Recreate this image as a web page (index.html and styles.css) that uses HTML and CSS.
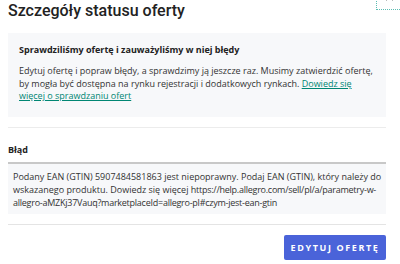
FILE: index.html
```html
<!DOCTYPE html>
<html lang="pl">
<head>
<meta charset="utf-8">
<link rel="stylesheet" href="styles.css">
</head>
<body>
<div class="page">
  <div class="focus-corner"><span class="close-mark"></span></div>
  <h1 class="title">Szczegóły statusu oferty</h1>
  <div class="notice">
    <h2 class="notice-head">Sprawdziliśmy ofertę i zauważyliśmy w niej błędy</h2>
    <p class="notice-text">Edytuj ofertę i popraw błędy, a sprawdzimy ją jeszcze raz. Musimy zatwierdzić ofertę, by mogła być dostępna na rynku rejestracji i dodatkowych rynkach. <a class="link" href="#">Dowiedz się więcej o sprawdzaniu ofert</a></p>
  </div>
  <div class="divider"></div>
  <div class="error-head">Błąd</div>
  <div class="error-box">Podany EAN (GTIN) 5907484581863 jest niepoprawny. Podaj EAN (GTIN), który należy do wskazanego produktu. Dowiedz się więcej <span class="url">https://help.allegro.com/sell/pl/a/parametry-w-allegro-aMZKj37Vauq?marketplaceId=allegro-pl#czym-jest-ean-gtin</span></div>
  <div class="divider bottom"></div>
  <div class="actions">
    <button class="btn">EDYTUJ OFERTĘ</button>
  </div>
</div>
</body>
</html>
```

FILE: styles.css
```css
* { box-sizing: border-box; }
html, body { margin: 0; padding: 0; background: #fff; }
body { font-family: "Open Sans", "Noto Sans", sans-serif; color: #222; overflow: hidden; }
.page { position: relative; padding: 0 14px 0 8px; width: 400px; height: 264px; }
.focus-corner {
  position: absolute; left: 376px; top: -12px; width: 40px; height: 22px;
  border: 1.5px dotted #5bbdb3;
}
.close-mark { display: block; margin: 10px 0 0 9px; width: 7px; height: 2px;
  border-left: 1px solid #bbb; border-right: 1px solid #bbb; }
.title { margin: 0; padding-top: 1px; font: 500 16px/20px Roboto, sans-serif; color: #222; }
.notice { margin-top: 12px; background: #f7f8fa; padding: 10px 11px 14px; }
.notice-head { margin: 0; font-size: 9px; line-height: 13px; font-weight: 700; color: #222; }
.notice-text { margin: 9px 0 0; font-size: 9px; line-height: 12.5px; color: #333; }
.link { color: #008673; text-decoration: underline; }
.divider { margin-top: 10px; height: 1px; background: #ececec; }
.error-head { margin-top: 15px; font-size: 9px; font-weight: 700; line-height: 13px; padding-bottom: 6px; border-bottom: 2px solid #c8c8c8; }
.error-box { background: #f7f8fa; padding: 6px 4px 5px 5px; font-size: 9px; line-height: 13px; color: #333; }
.url { letter-spacing: -0.25px; }
.divider.bottom { margin-top: 10px; background: #e4e4e4; }
.actions { display: flex; justify-content: flex-end; margin-top: 10px; }
.btn { border: 0; border-radius: 2px; background: #4a63d9; color: #fff; font: 700 9px "Open Sans", sans-serif; letter-spacing: 1.6px; height: 25px; width: 102px; padding: 0; }
```
